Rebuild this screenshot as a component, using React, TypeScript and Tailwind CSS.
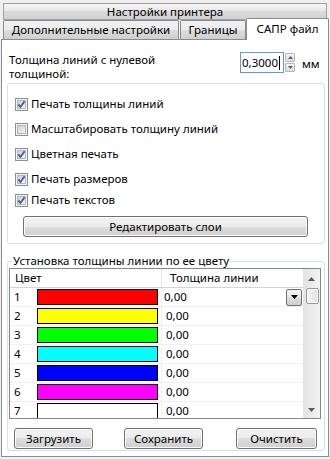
import type { ReactNode } from "react";

const swatches = ["#ff0000", "#ffff00", "#00ff00", "#00ffff", "#0000ff", "#ff00ff", "#ffffff"];

const CheckBox = ({ checked }: { checked: boolean }) => (
  <svg width="13" height="13" viewBox="0 0 13 13" className="shrink-0">
    <defs>
      <linearGradient id="cbFill" x1="0" y1="0" x2="1" y2="1">
        <stop offset="0" stopColor="#cbcfd5" />
        <stop offset="1" stopColor="#f7f7f7" />
      </linearGradient>
    </defs>
    <rect x="0.5" y="0.5" width="12" height="12" fill="#f4f4f4" stroke="#8e8f8f" />
    <rect x="2.5" y="2.5" width="8" height="8" fill="url(#cbFill)" stroke="#b4b8bd" />
    {checked && (
      <path d="M3.3 6.4 L5.4 9 L9.6 3.3" fill="none" stroke="#4a5f8f" strokeWidth="1.9" />
    )}
  </svg>
);

const WinButton = ({ className, children }: { className: string; children: ReactNode }) => (
  <button
    type="button"
    className={`flex items-center justify-center rounded-[3px] border border-[#707070] bg-[linear-gradient(#f2f2f2_0%,#ebebeb_50%,#dddddd_50%,#cfcfcf_100%)] shadow-[inset_0_0_0_1px_#fcfcfc] text-[11.5px] text-black leading-none ${className}`}
  >
    {children}
  </button>
);

const Option = ({ checked, label, className }: { checked: boolean; label: string; className: string }) => (
  <div className={`flex h-[16px] items-center gap-[3px] ${className}`}>
    <CheckBox checked={checked} />
    <span>{label}</span>
  </div>
);

export default function App() {
  return (
    <div className="flex h-[459px] w-[330px] flex-col overflow-hidden bg-[#f0f0f0] font-['Noto_Sans','Liberation_Sans',sans-serif] text-[11.5px] text-black">
      <div className="mx-[3px] mt-[3px] flex h-[17px] items-center justify-center border border-[#a0a0a0] bg-[linear-gradient(#f7f7f7,#e6e6e6_50%,#dadada_50%,#d2d2d2)] leading-none">
        Настройки принтера
      </div>

      <div className="flex h-[19px] items-start pl-[3px]">
        <div className="flex h-[19px] w-[176px] items-center justify-center rounded-t-[2px] border border-b-0 border-[#898c95] bg-[linear-gradient(#f2f2f2,#ebebeb_50%,#dddddd_50%,#cfcfcf)] leading-none">
          Дополнительные настройки
        </div>
        <div className="ml-px flex h-[19px] w-[66px] items-center justify-center rounded-t-[2px] border border-b-0 border-[#898c95] bg-[linear-gradient(#f2f2f2,#ebebeb_50%,#dddddd_50%,#cfcfcf)] leading-none">
          Границы
        </div>
        <div className="relative z-10 -mt-[2px] flex h-[22px] w-[83px] items-center justify-center rounded-t-[2px] border border-b-0 border-[#898c95] bg-white pb-[2px] leading-none">
          САПР файл
        </div>
      </div>

      <div className="ml-px flex h-[418px] w-[328px] flex-col border border-[#898c95] bg-white">
        <div className="mt-[12px] flex h-[21px] items-start pl-[7px]">
          <div className="mt-px w-[231px] leading-[14px]">
            Толщина линий с нулевой
            <br />
            толщиной:
          </div>
          <div className="flex h-[21px] w-[44px] items-center border border-[#569de5] pl-[1px]">
            <span>0,3000</span>
            <span className="ml-px h-[14px] w-px bg-black" />
          </div>
          <div className="ml-[1px] flex flex-col gap-px pt-px">
            <div className="flex h-[9px] w-[10px] items-center justify-center rounded-[1px] border border-[#b6b6b6] bg-[linear-gradient(#f4f4f4,#dcdcdc)]">
              <svg width="5" height="3" viewBox="0 0 5 3"><path d="M0 3 L2.5 0 L5 3 Z" fill="#4c607f" /></svg>
            </div>
            <div className="flex h-[9px] w-[10px] items-center justify-center rounded-[1px] border border-[#b6b6b6] bg-[linear-gradient(#f4f4f4,#dcdcdc)]">
              <svg width="5" height="3" viewBox="0 0 5 3"><path d="M0 0 L2.5 3 L5 0 Z" fill="#4c607f" /></svg>
            </div>
          </div>
          <span className="ml-[7px] mt-[3px]">мм</span>
        </div>

        <div className="ml-[5px] mt-[10px] flex h-[161px] w-[318px] flex-col rounded-[3px] border border-[#d5dfe5] pl-[7px]">
          <Option checked label="Печать толщины линий" className="mt-[12px]" />
          <Option checked={false} label="Масштабировать толщину линий" className="mt-[9px]" />
          <Option checked label="Цветная печать" className="mt-[9px]" />
          <Option checked label="Печать размеров" className="mt-[9px]" />
          <Option checked label="Печать текстов" className="mt-[5px]" />
          <WinButton className="ml-[8px] mt-[8px] h-[21px] w-[285px]">Редактировать слои</WinButton>
        </div>

        <fieldset className="ml-[5px] mt-[10px] w-[318px] rounded-[3px] border border-[#d5dfe5] pb-[1px]">
          <legend className="ml-[4px] px-[1px] leading-[14px]">Установка толщины линии по ее цвету</legend>
          <div className="ml-px flex h-[151px] w-[312px] border border-[#828790]">
            <div className="flex w-[293px] flex-col">
              <div className="flex h-[19px] shrink-0 border-b border-[#d5d5d5]">
                <div className="flex w-[152px] items-center border-r border-[#e5e5e5] pl-[5px]">Цвет</div>
                <div className="flex flex-1 items-center pl-[8px]">Толщина линии</div>
              </div>
              <div className="flex flex-col overflow-hidden">
                {swatches.map((c, i) => (
                  <div key={c + i} className="flex h-[19px] shrink-0 border-b border-[#f0f0f0]">
                    <div className="flex w-[152px] items-center border-r border-[#f0f0f0]">
                      <span className="w-[27px] pl-[4px]">{i + 1}</span>
                      <span className="h-[16px] w-[121px] border border-black" style={{ backgroundColor: c }} />
                    </div>
                    <div className={`flex flex-1 items-center ${i === 0 ? "pl-[2px]" : "pl-[4px]"}`}>
                      <span className="flex-1">0,00</span>
                      {i === 0 && (
                        <div className="mr-px flex h-[17px] w-[16px] items-center justify-center rounded-[2px] border border-[#707070] bg-[linear-gradient(#f2f2f2,#ebebeb_50%,#dddddd_50%,#cfcfcf)]">
                          <svg width="7" height="4" viewBox="0 0 7 4"><path d="M0 0 L7 0 L3.5 4 Z" fill="#000" /></svg>
                        </div>
                      )}
                    </div>
                  </div>
                ))}
              </div>
            </div>
            <div className="flex w-[17px] flex-col items-center bg-[linear-gradient(90deg,#e3e3e3,#f2f2f2)]">
              <div className="flex h-[19px] items-center justify-center">
                <svg width="7" height="4" viewBox="0 0 7 4"><path d="M0 4 L3.5 0 L7 4 Z" fill="#5a5a5a" /></svg>
              </div>
              <div className="ml-[2px] h-[16px] w-[13px] rounded-[2px] border border-[#9a9a9a] bg-[linear-gradient(90deg,#f3f3f3,#e2e2e2)] shadow-[inset_0_0_0_1px_#fafafa]" />
              <div className="flex-1" />
              <div className="flex h-[17px] items-center justify-center">
                <svg width="7" height="4" viewBox="0 0 7 4"><path d="M0 0 L7 0 L3.5 4 Z" fill="#5a5a5a" /></svg>
              </div>
            </div>
          </div>
          <div className="mt-[9px] flex h-[21px]">
            <WinButton className="ml-[6px] w-[79px]">Загрузить</WinButton>
            <WinButton className="ml-[31px] w-[79px]">Сохранить</WinButton>
            <WinButton className="ml-[33px] w-[81px]">Очистить</WinButton>
          </div>
        </fieldset>
      </div>
    </div>
  );
}
